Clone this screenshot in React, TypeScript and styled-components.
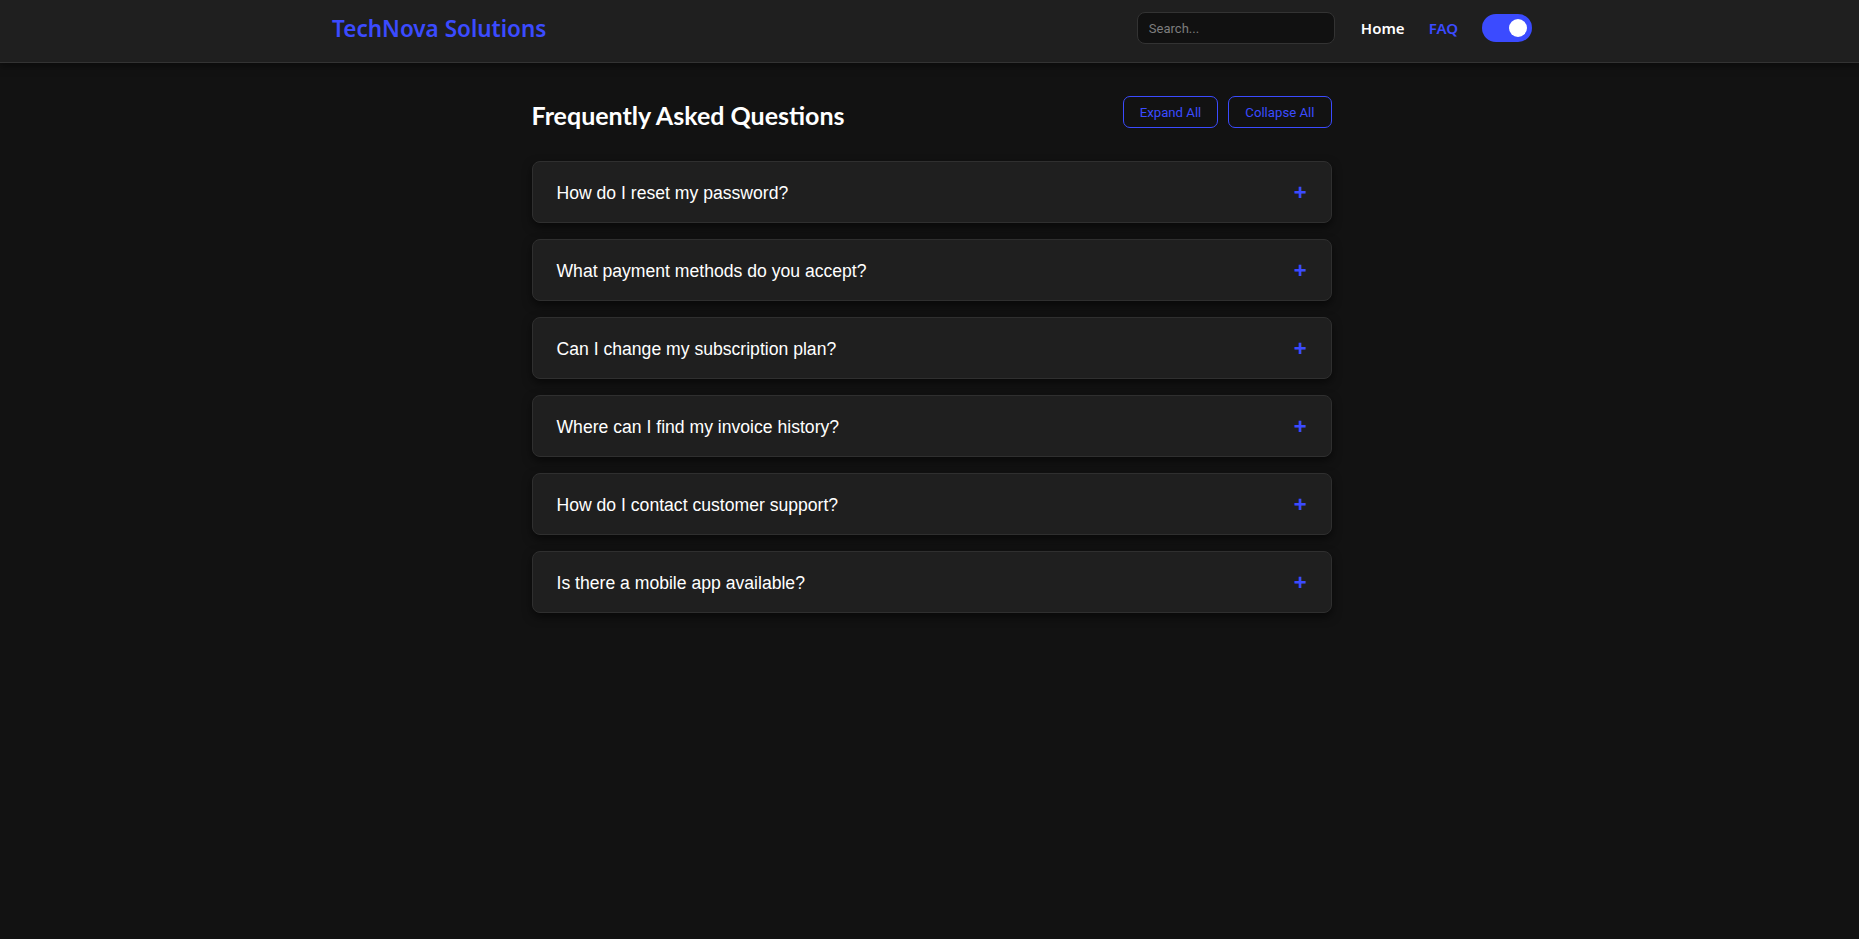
import React from "react";
import styled, { createGlobalStyle } from "styled-components";

const BLUE = "#3b4bff";

const GlobalStyle = createGlobalStyle`
  html, body {
    margin: 0;
    padding: 0;
    background: #121212;
    color: #ffffff;
    font-family: "Liberation Sans", Arial, sans-serif;
  }
  * { box-sizing: border-box; }
`;

const questions = [
  "How do I reset my password?",
  "What payment methods do you accept?",
  "Can I change my subscription plan?",
  "Where can I find my invoice history?",
  "How do I contact customer support?",
  "Is there a mobile app available?",
];

export default function App() {
  return (
    <Page>
      <GlobalStyle />
      <Header>
        <HeaderInner>
          <Logo>TechNova Solutions</Logo>
          <Nav>
            <Search placeholder="Search..." />
            <NavLink>Home</NavLink>
            <NavLink active>FAQ</NavLink>
            <Toggle aria-label="Toggle theme">
              <Knob />
            </Toggle>
          </Nav>
        </HeaderInner>
      </Header>

      <Main>
        <TitleRow>
          <Title>Frequently Asked Questions</Title>
          <Actions>
            <OutlineButton>Expand All</OutlineButton>
            <OutlineButton>Collapse All</OutlineButton>
          </Actions>
        </TitleRow>

        <List>
          {questions.map((q) => (
            <Item key={q}>
              <Question>{q}</Question>
              <Plus>+</Plus>
            </Item>
          ))}
        </List>
      </Main>
    </Page>
  );
}

const Page = styled.div`
  min-height: 100vh;
  background: #121212;
`;

const Header = styled.header`
  background: #1f1f1f;
  border-bottom: 1px solid #333333;
  box-shadow: 0 2px 8px rgba(0, 0, 0, 0.5);
  padding: 0 0 6px 5px;
`;

const HeaderInner = styled.div`
  max-width: 1200px;
  height: 56px;
  margin: 0 auto;
  display: flex;
  align-items: center;
  justify-content: space-between;
`;

const Logo = styled.div`
  font-family: "Noto Sans", "Open Sans", sans-serif;
  font-weight: 600;
  font-size: 22.5px;
  color: ${BLUE};
`;

const Nav = styled.nav`
  display: flex;
  align-items: center;
  gap: 24px;
`;

const Search = styled.input`
  width: 198px;
  height: 32px;
  background: #111111;
  border: 1px solid #333333;
  border-radius: 8px;
  padding: 0 11px;
  color: #dddddd;
  font-family: Roboto, sans-serif;
  font-size: 13px;
  outline: none;
  margin-right: 2px;

  &::placeholder {
    color: #7d7d7d;
  }
`;

const NavLink = styled.a<{ active?: boolean }>`
  font-family: "Noto Sans", "Open Sans", sans-serif;
  font-weight: 600;
  font-size: 15px;
  color: ${(p) => (p.active ? BLUE : "#ffffff")};
  text-decoration: none;
  cursor: pointer;
`;

const Toggle = styled.div`
  width: 50px;
  height: 28px;
  border-radius: 14px;
  background: ${BLUE};
  display: flex;
  align-items: center;
  justify-content: flex-end;
  padding-right: 5px;
  cursor: pointer;
`;

const Knob = styled.span`
  width: 18px;
  height: 18px;
  border-radius: 50%;
  background: #ffffff;
`;

const Main = styled.main`
  width: 800px;
  margin: 0 auto;
  padding-top: 33px;
  position: relative;
  left: 2px;
`;

const TitleRow = styled.div`
  display: flex;
  align-items: center;
  justify-content: space-between;
  height: 32px;
  margin-bottom: 33px;
`;

const Title = styled.h2`
  margin: 0;
  margin-top: 5px;
  font-family: Lato, "Noto Sans", sans-serif;
  font-weight: 700;
  font-size: 25px;
  color: #ffffff;
`;

const Actions = styled.div`
  display: flex;
  gap: 10px;
`;

const OutlineButton = styled.button`
  height: 32px;
  padding: 0 16px;
  background: transparent;
  border: 1px solid ${BLUE};
  border-radius: 7px;
  color: ${BLUE};
  font-family: Roboto, sans-serif;
  font-size: 13.2px;
  cursor: pointer;
`;

const List = styled.div`
  display: flex;
  flex-direction: column;
  gap: 16px;
`;

const Item = styled.div`
  height: 62px;
  background: #1f1f1f;
  border: 1px solid #2f2f2f;
  border-radius: 8px;
  box-shadow: 0 4px 10px rgba(0, 0, 0, 0.55);
  display: flex;
  align-items: center;
  justify-content: space-between;
  padding: 2px 24px 0;
  cursor: pointer;
`;

const Question = styled.span`
  font-family: "Liberation Sans", Arial, sans-serif;
  font-size: 17.6px;
  color: #ffffff;
`;

const Plus = styled.span`
  font-family: "Liberation Sans", Arial, sans-serif;
  font-weight: 700;
  font-size: 22px;
  color: ${BLUE};
  line-height: 1;
`;
